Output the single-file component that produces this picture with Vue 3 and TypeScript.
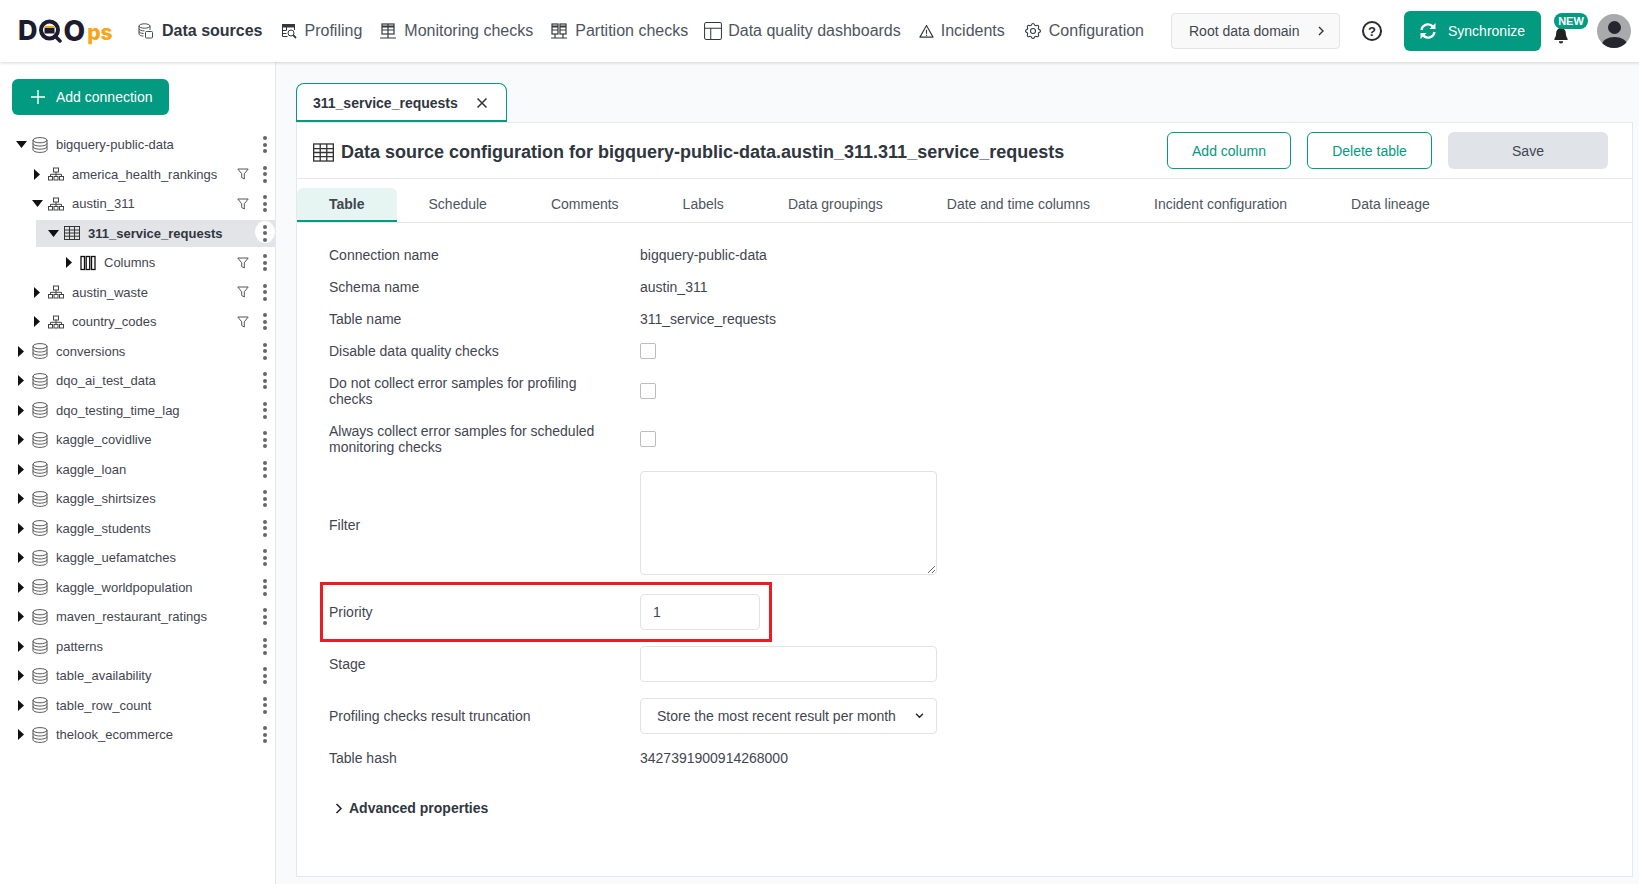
<script setup lang="ts">
interface NavItem { label: string; icon: string; active?: boolean; gap: number; size?: number; iconGap?: number }
interface TreeRow { label: string; icon: string; level: number; open?: boolean; filter?: boolean; selected?: boolean }

const nav: NavItem[] = [
  { label: 'Data sources', icon: 'n-source', active: true, gap: 0 },
  { label: 'Profiling', icon: 'n-profile', gap: 18 },
  { label: 'Monitoring checks', icon: 'n-monitor', gap: 18 },
  { label: 'Partition checks', icon: 'n-partition', gap: 18 },
  { label: 'Data quality dashboards', icon: 'n-dash', gap: 16, size: 18, iconGap: 6 },
  { label: 'Incidents', icon: 'n-incident', gap: 18, size: 15, iconGap: 7 },
  { label: 'Configuration', icon: 'n-gear', gap: 18, size: 20, iconGap: 6 }
]

const dbNames = ['conversions', 'dqo_ai_test_data', 'dqo_testing_time_lag', 'kaggle_covidlive', 'kaggle_loan', 'kaggle_shirtsizes', 'kaggle_students', 'kaggle_uefamatches', 'kaggle_worldpopulation', 'maven_restaurant_ratings', 'patterns', 'table_availability', 'table_row_count', 'thelook_ecommerce']

const tree: TreeRow[] = [
  { label: 'bigquery-public-data', icon: 't-db', level: 0, open: true },
  { label: 'america_health_rankings', icon: 't-schema', level: 1, filter: true },
  { label: 'austin_311', icon: 't-schema', level: 1, open: true, filter: true },
  { label: '311_service_requests', icon: 't-table', level: 2, open: true, selected: true },
  { label: 'Columns', icon: 't-cols', level: 3, filter: true },
  { label: 'austin_waste', icon: 't-schema', level: 1, filter: true },
  { label: 'country_codes', icon: 't-schema', level: 1, filter: true },
  ...dbNames.map((label) => ({ label, icon: 't-db', level: 0 }))
]

const tabs = ['Table', 'Schedule', 'Comments', 'Labels', 'Data groupings', 'Date and time columns', 'Incident configuration', 'Data lineage']

const indent = (r: TreeRow) => (r.selected ? 9 : 13 + 16 * r.level) + 'px'
</script>

<template>
  <div class="page">
    <svg class="sprite" aria-hidden="true">
      <symbol id="t-db" viewBox="0 0 16 16"><g fill="none" stroke="currentColor" stroke-width=".9"><ellipse cx="8" cy="3.2" rx="7" ry="2.6"/><path d="M1 3.2v9.6c0 1.4 3.1 2.6 7 2.6s7-1.2 7-2.6V3.2"/><path d="M1 6.4c0 1.4 3.1 2.6 7 2.6s7-1.2 7-2.6M1 9.6c0 1.4 3.1 2.6 7 2.6s7-1.200 7-2.600"/></g></symbol>
      <symbol id="t-schema" viewBox="0 0 16 16"><g fill="none" stroke="currentColor" stroke-width="1"><rect x="5.500" y="2" width="5" height="4"/><rect x=".5" y="10.500" width="4" height="3.500"/><rect x="6" y="10.500" width="4" height="3.500"/><rect x="11.500" y="10.500" width="4" height="3.500"/><path d="M8 6v4.500M2.500 10.500V8.300h11v2.200"/></g></symbol>
      <symbol id="t-table" viewBox="0 0 16 16"><g fill="none" stroke="currentColor" stroke-width="1"><rect x=".5" y="1.500" width="15" height="13"/><path d="M.5 5h15M.5 8h15M.5 11.200h15M5.500 1.500v13M10.500 1.500v13"/></g></symbol>
      <symbol id="t-cols" viewBox="0 0 16 16"><g fill="none" stroke="#111" stroke-width="1.300"><rect x="1" y="1.500" width="3.500" height="13"/><rect x="6.200" y="1.500" width="3.500" height="13"/><rect x="11.500" y="1.500" width="3.500" height="13"/></g></symbol>
      <symbol id="t-filter" viewBox="0 0 12 12"><path d="M.8 1h10.400L7.300 5.800V11L4.700 9.500V5.800z" fill="none" stroke="currentColor"/></symbol>
      <symbol id="n-source" viewBox="0 0 16 16"><g fill="none" stroke="currentColor" stroke-width=".9"><ellipse cx="6.500" cy="3" rx="5.500" ry="2.200"/><path d="M1 3v8c0 1 2 2 4.500 2.100M12 3v4M1 5.700c0 1.200 2.500 2.200 5.500 2.200M1 8.400c0 1.100 2 2 4.500 2.100"/><rect x="7.500" y="8.500" width="7" height="6.500" rx="1" fill="#fff"/></g></symbol>
      <symbol id="n-profile" viewBox="0 0 16 16"><rect x="1" y="1" width="13" height="3.500" fill="currentColor"/><g fill="none" stroke="currentColor"><path d="M1.500 4v9.500h5M13.500 4v3M1.500 7.500h4M1.500 10.500h4M5.500 4v3"/><circle cx="10" cy="10" r="3"/><path d="M12.200 12.200L15 15" stroke-width="1.800"/></g></symbol>
      <symbol id="n-monitor" viewBox="0 0 16 16"><g fill="none" stroke="currentColor" stroke-width="1.200"><rect x="2" y="1" width="12" height="10"/><path d="M2 3.500h12" stroke-width="2"/><path d="M2 7h12M8 1v10M0 15h16M8 11v4"/></g></symbol>
      <symbol id="n-partition" viewBox="0 0 16 16"><g fill="none" stroke="currentColor" stroke-width="1.200"><rect x="1" y="1" width="6" height="10"/><rect x="9" y="1" width="6" height="10"/><path d="M1 3.500h6M9 3.500h6" stroke-width="2"/><path d="M1 7h6M9 7h6M0 15h16M4 11v4M12 11v4"/></g></symbol>
      <symbol id="n-dash" viewBox="0 0 16 16"><g fill="none" stroke="currentColor" stroke-width=".9"><rect x=".5" y=".5" width="15" height="15" rx="1.500"/><path d="M.5 5.500h15M6 5.500v10"/></g></symbol>
      <symbol id="n-incident" viewBox="0 0 16 16"><path d="M8 1.500L15 14H1z" fill="none" stroke="currentColor" stroke-width="1.200" stroke-linejoin="round"/><path d="M8 6v4.500M8 11.500v1.200" stroke="currentColor" stroke-width="1.200"/></symbol>
      <symbol id="n-gear" viewBox="0 0 24 24"><g fill="none" stroke="currentColor" stroke-width="1.300"><path d="M10.325 4.317c.426-1.756 2.924-1.756 3.35 0a1.724 1.724 0 002.573 1.066c1.543-.94 3.31.826 2.37 2.37a1.724 1.724 0 001.065 2.572c1.756.426 1.756 2.924 0 3.35a1.724 1.724 0 00-1.066 2.573c.94 1.543-.826 3.31-2.37 2.370a1.724 1.724 0 00-2.572 1.065c-.426 1.756-2.924 1.756-3.35 0a1.724 1.724 0 00-2.573-1.066c-1.543.94-3.31-.826-2.37-2.370a1.724 1.724 0 00-1.065-2.572c-1.756-.426-1.756-2.924 0-3.350a1.724 1.724 0 001.066-2.573c-.94-1.543.826-3.310 2.370-2.370.996.608 2.296.07 2.572-1.065z"/><circle cx="12" cy="12" r="3"/></g></symbol>
    </svg>

    <header class="topbar">
      <div class="logo">
        <span class="logo-big">D</span>
        <svg class="logo-q" viewBox="0 0 24 24" width="24" height="24">
          <circle cx="11.500" cy="11" r="8.500" fill="#fff" stroke="#1d1b2e" stroke-width="4"/>
          <path d="M6.500 8.500h10v6h-10z" fill="#1d1b2e"/>
          <path d="M7 7h9v2H7z" fill="#f9a51a"/>
          <path d="M17 17l5 5" stroke="#1d1b2e" stroke-width="3.500" stroke-linecap="round"/>
        </svg>
        <span class="logo-big logo-o">O</span>
        <span class="logo-ps">ps</span>
      </div>

      <nav class="nav">
        <a v-for="n in nav" :key="n.label" class="nav-item" :class="{ active: n.active }" :style="{ marginLeft: n.gap + 'px', gap: (n.iconGap ?? 8) + 'px' }">
          <svg class="nav-icon" :style="{ width: (n.size ?? 16) + 'px', height: (n.size ?? 16) + 'px' }"><use :href="'#' + n.icon" /></svg>
          <span>{{ n.label }}</span>
        </a>
      </nav>

      <div class="domain">
        <span>Root data domain</span>
        <svg width="8" height="10" viewBox="0 0 8 10"><path d="M2 1l4 4-4 4" fill="none" stroke="#333" stroke-width="1.400"/></svg>
      </div>
      <span class="help">?</span>
      <button class="sync">
        <svg width="18" height="18" viewBox="0 0 18 18"><g fill="none" stroke="#fff" stroke-width="2.400"><path d="M2.500 8a6.600 6.600 0 0 1 11.400-3.400"/><path d="M15.500 10a6.600 6.600 0 0 1-11.400 3.400"/></g><path d="M16.500 1v6h-6zM1.500 17v-6h6z" fill="#fff"/></svg>
        <span>Synchronize</span>
      </button>
      <div class="bell">
        <svg width="14" height="17" viewBox="0 0 16 19"><path d="M8 1a5.500 5.500 0 0 0-5.500 5.500c0 4-1.500 5.500-2 6.500v1.500h15V13c-.5-1-2-2.500-2-6.500A5.500 5.500 0 0 0 8 1z" fill="#222"/><path d="M5.500 16h5a2.500 2.500 0 0 1-5 0z" fill="#222"/></svg>
        <span class="badge">NEW</span>
      </div>
      <svg class="avatar" width="34" height="34" viewBox="0 0 34 34">
        <defs><clipPath id="av"><circle cx="17" cy="17" r="17" /></clipPath></defs>
        <g clip-path="url(#av)"><rect width="34" height="34" fill="#a9aaac"/><circle cx="17.500" cy="13.500" r="6.500" fill="#26262e"/><ellipse cx="17.500" cy="31" rx="12.500" ry="8" fill="#26262e"/></g>
      </svg>
    </header>

    <div class="body">
      <aside class="side">
        <button class="add">
          <svg width="14" height="14" viewBox="0 0 14 14"><path d="M7 0v14M0 7h14" stroke="#fff" stroke-width="1.400"/></svg>
          <span>Add connection</span>
        </button>
        <ul class="tree">
          <li v-for="r in tree" :key="r.label" class="row" :class="{ selected: r.selected }" :style="{ paddingLeft: indent(r) }">
            <span class="caret">
              <svg v-if="r.open" width="11" height="7" viewBox="0 0 11 7"><path d="M0 0h11L5.500 7z" fill="#111"/></svg>
              <svg v-else width="6" height="11" viewBox="0 0 6 11"><path d="M0 0l6 5.500L0 11z" fill="#111"/></svg>
            </span>
            <svg class="t-icon"><use :href="'#' + r.icon" /></svg>
            <span class="t-label">{{ r.label }}</span>
            <svg v-if="r.filter" class="t-filter"><use href="#t-filter" /></svg>
            <span class="dots"><i></i><i></i><i></i></span>
          </li>
        </ul>
      </aside>

      <main class="main">
        <div class="tab-top">
          <span>311_service_requests</span>
          <svg width="10" height="10" viewBox="0 0 10 10"><path d="M.5.5l9 9M9.500.5l-9 9" stroke="#333" stroke-width="1.500"/></svg>
        </div>
        <section class="card">
          <div class="title-row">
            <svg class="title-icon"><use href="#t-table" /></svg>
            <h1>Data source configuration for bigquery-public-data.austin_311.311_service_requests</h1>
            <button class="btn outline w-add">Add column</button>
            <button class="btn outline w-del">Delete table</button>
            <button class="btn save">Save</button>
          </div>
          <div class="tabs">
            <a v-for="(t, i) in tabs" :key="t" class="tab" :class="{ on: i === 0 }">{{ t }}</a>
          </div>

          <div class="form">
            <div class="f-row h32"><label>Connection name</label><span>bigquery-public-data</span></div>
            <div class="f-row h32"><label>Schema name</label><span>austin_311</span></div>
            <div class="f-row h32"><label>Table name</label><span>311_service_requests</span></div>
            <div class="f-row h32"><label>Disable data quality checks</label><input type="checkbox" class="check" /></div>
            <div class="f-row h48"><label>Do not collect error samples for profiling checks</label><input type="checkbox" class="check" /></div>
            <div class="f-row h48"><label>Always collect error samples for scheduled monitoring checks</label><input type="checkbox" class="check" /></div>
            <div class="f-row h123"><label class="low">Filter</label><textarea class="field wide area"></textarea></div>
            <div class="f-row h52 marked">
              <label>Priority</label><input class="field short" value="1" />
              <div class="redbox"></div>
            </div>
            <div class="f-row h52"><label>Stage</label><input class="field wide" /></div>
            <div class="f-row h52">
              <label>Profiling checks result truncation</label>
              <div class="select-wrap">
                <select class="field wide sel"><option>Store the most recent result per month</option></select>
                <svg class="chev" width="9" height="6" viewBox="0 0 10 7"><path d="M1 1l4 4 4-4" fill="none" stroke="#222" stroke-width="1.600"/></svg>
              </div>
            </div>
            <div class="f-row h32"><label>Table hash</label><span>3427391900914268000</span></div>
            <div class="advanced">
              <svg width="8" height="11" viewBox="0 0 8 11"><path d="M1.500 1l4.500 4.500L1.500 10" fill="none" stroke="#222" stroke-width="1.500"/></svg>
              <span>Advanced properties</span>
            </div>
          </div>
        </section>
      </main>
    </div>
  </div>
</template>

<style>
html, body { margin: 0; height: 100%; overflow: hidden; background: #fff; }
</style>

<style scoped>
.page { width: 1639px; height: 884px; display: flex; flex-direction: column; font-family: "Liberation Sans", Arial, sans-serif; font-size: 14px; color: #3f4651; overflow: hidden; }
.sprite { width: 0; height: 0; position: absolute; }

.topbar { height: 62px; flex: none; display: flex; align-items: center; padding-left: 18px; background: #fff; box-shadow: 0 1px 3px rgba(0,0,0,.16); position: relative; z-index: 2; box-sizing: border-box; }
.logo { width: 93px; display: flex; align-items: center; flex: none; font-family: Inter, "Liberation Sans", sans-serif; height: 28px; }
.logo-big { font-size: 27px; font-weight: 800; color: #1d1b2e; line-height: 28px; }
.logo-q { flex: none; margin: 0 2px 0 0; }
.logo-o { font-size: 28px; }
.logo-ps { font-size: 21px; font-weight: 800; color: #f9a51a; line-height: 20px; margin: 4px 0 0 2px; }

.nav { display: flex; align-items: center; margin-left: 27px; flex: none; }
.nav-item { display: flex; align-items: center; font-size: 16px; color: #4d5560; white-space: nowrap; }
.nav-item.active { font-weight: 700; color: #2f3640; }
.nav-icon { color: #33383f; flex: none; }

.domain { margin-left: 27px; width: 169px; height: 36px; box-sizing: border-box; border: 1px solid #e3e4e6; border-radius: 4px; background: #f9f9f9; display: flex; align-items: center; justify-content: space-between; padding: 0 14px 0 17px; color: #3f4651; flex: none; }
.help { margin-left: 22px; width: 20px; height: 20px; box-sizing: border-box; border: 2px solid #2a2a2a; border-radius: 50%; display: flex; align-items: center; justify-content: center; font-size: 13px; font-weight: 700; color: #2a2a2a; flex: none; }
.sync { margin-left: 22px; width: 137px; height: 40px; border: 0; border-radius: 6px; background: #029a80; color: #fff; font: inherit; display: flex; align-items: center; gap: 11px; padding: 0 0 0 15px; flex: none; }
.bell { position: relative; margin-left: 12px; width: 36px; height: 40px; display: flex; align-items: center; padding-top: 8px; box-sizing: border-box; flex: none; }
.bell svg { margin-left: 1px; }
.badge { position: absolute; left: 1px; top: 2px; width: 34px; height: 16px; border-radius: 8px; background: #029a80; color: #fff; font-size: 11px; font-weight: 700; line-height: 16px; text-align: center; }
.avatar { margin-left: 8px; flex: none; }

.body { flex: 1; display: flex; min-height: 0; }
.side { width: 276px; box-sizing: border-box; border-right: 1px solid #e5e7eb; background: #fff; flex: none; padding-top: 17px; }
.add { margin-left: 12px; width: 157px; height: 36px; border: 0; border-radius: 6px; background: #029a80; color: #fff; font: inherit; display: flex; align-items: center; gap: 11px; padding: 0 0 0 19px; }
.tree { list-style: none; margin: 16px 0 0; padding: 0; }
.row { height: 27px; margin-bottom: 2.5px; display: flex; align-items: center; font-size: 13px; color: #3f4651; position: relative; box-sizing: border-box; padding-right: 8px; }
.row.selected { margin-left: 36px; background: #e2e4e8; font-weight: 700; color: #2f3640; font-size: 13px; }
.caret { width: 16px; flex: none; display: flex; justify-content: center; align-items: center; margin-right: 3px; }
.t-icon { width: 16px; height: 16px; flex: none; color: #444; margin-right: 8px; }
.row.selected .t-icon { color: #333; }
.t-label { flex: 1; white-space: nowrap; }
.t-filter { width: 12px; height: 12px; color: #555; flex: none; margin-right: 14px; }
.dots { width: 4px; display: flex; flex-direction: column; gap: 2.500px; flex: none; position: relative; z-index: 0; }
.dots i { width: 4px; height: 4px; border-radius: 50%; background: #666; }
.selected .dots::before { content: ""; position: absolute; left: -8px; top: -4px; width: 20px; height: 22px; background: #fff; border-radius: 50%; z-index: -1; }

.main { flex: 1; min-width: 0; background: #f9fafb; padding: 21px 6px 7px 20px; display: flex; flex-direction: column; }
.tab-top { width: 211px; height: 39px; flex: none; box-sizing: border-box; background: #fff; border: 1px solid #029a80; border-bottom-width: 2px; border-radius: 8px 8px 0 0; display: flex; align-items: center; padding: 2px 0 0 16px; gap: 19px; font-weight: 700; color: #2f3640; }
.card { flex: 1; background: #fff; border: 1px solid #e5e7eb; box-sizing: border-box; display: flex; flex-direction: column; }
.title-row { height: 56px; box-sizing: border-box; border-bottom: 1px solid #e5e7eb; display: flex; align-items: center; padding: 0 24px 0 16px; flex: none; }
.title-icon { width: 21px; height: 21px; color: #333; flex: none; margin: 3px 7px 0 0; }
h1 { margin: 4px 0 0; font-size: 18px; font-weight: 700; color: #2f3640; flex: 1; white-space: nowrap; }
.btn { height: 37px; border-radius: 6px; font: inherit; background: #fff; box-sizing: border-box; flex: none; }
.outline { border: 1px solid #029a80; color: #029a80; }
.w-add { width: 124px; margin-right: 16px; }
.w-del { width: 125px; margin-right: 16px; }
.save { width: 160px; border: 0; background: #e0e3e8; color: #3f4651; }

.tabs { height: 44px; box-sizing: border-box; border-bottom: 1px solid #e5e7eb; padding-top: 9px; display: flex; flex: none; }
.tab { padding: 0 32px; height: 34px; box-sizing: border-box; line-height: 32px; color: #4d5560; border-bottom: 2px solid transparent; white-space: nowrap; }
.tab.on { background: #e6f5f2; border-bottom-color: #029a80; border-radius: 6px 6px 0 0; font-weight: 700; color: #3f4651; }

.form { padding: 16px 32px 0; }
.f-row { display: flex; align-items: center; position: relative; }
.f-row label { width: 311px; flex: none; padding-right: 31px; box-sizing: border-box; line-height: 16px; }
.f-row label.low { margin-top: 4px; }
.h32 { height: 32px; }
.h48 { height: 48px; }
.h52 { height: 52px; }
.h123 { height: 123px; padding-bottom: 3px; box-sizing: border-box; }
.check { appearance: none; width: 16px; height: 16px; margin: 0; box-sizing: border-box; border: 1px solid #bcbcbc; border-radius: 2px; background: #fff; }
.field { box-sizing: border-box; height: 36px; border: 1px solid #e0e2e5; border-radius: 4px; background: #fff; font: inherit; color: #3f4651; outline: none; margin: 0; }
input.field { padding: 0 12px; }
.wide { width: 297px; }
.short { width: 120px; }
.area { height: 104px; display: block; resize: both; }
.select-wrap { position: relative; width: 297px; height: 36px; }
.sel { appearance: none; padding: 0 16px; display: block; }
.chev { position: absolute; right: 13px; top: 15px; }
.redbox { position: absolute; left: -9px; top: -4px; width: 452px; height: 60px; box-sizing: border-box; border: 3px solid #ed1c24; pointer-events: none; }
.advanced { margin: 22px 0 0 6px; height: 24px; display: flex; align-items: center; gap: 6px; font-weight: 700; color: #2f3640; }
</style>
